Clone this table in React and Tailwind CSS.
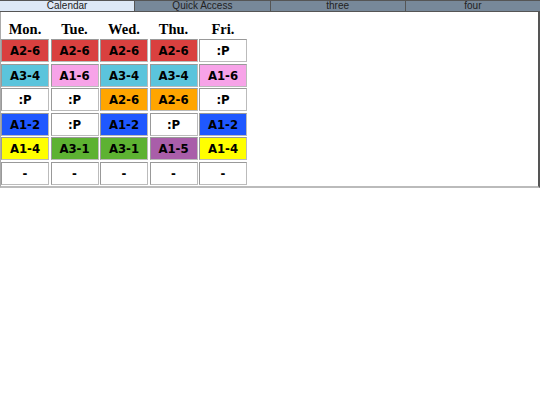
import React from "react";

const rows = [
  [["A2-6", "bg-[#d9403f]"], ["A2-6", "bg-[#d9403f]"], ["A2-6", "bg-[#d9403f]"], ["A2-6", "bg-[#d9403f]"], [":P", "bg-white"]],
  [["A3-4", "bg-[#5bc4dc]"], ["A1-6", "bg-[#f7a3e8]"], ["A3-4", "bg-[#5bc4dc]"], ["A3-4", "bg-[#5bc4dc]"], ["A1-6", "bg-[#f7a3e8]"]],
  [[":P", "bg-white"], [":P", "bg-white"], ["A2-6", "bg-[#ffa500]"], ["A2-6", "bg-[#ffa500]"], [":P", "bg-white"]],
  [["A1-2", "bg-[#1f58ff]"], [":P", "bg-white"], ["A1-2", "bg-[#1f58ff]"], [":P", "bg-white"], ["A1-2", "bg-[#1f58ff]"]],
  [["A1-4", "bg-[#ffff00]"], ["A3-1", "bg-[#5db232]"], ["A3-1", "bg-[#5db232]"], ["A1-5", "bg-[#a95ea9]"], ["A1-4", "bg-[#ffff00]"]],
  [["-", "bg-white"], ["-", "bg-white"], ["-", "bg-white"], ["-", "bg-white"], ["-", "bg-white"]],
];

const days = ["Mon.", "Tue.", "Wed.", "Thu.", "Fri."];
const tabs = ["Calendar", "Quick Access", "three", "four"];

export default function App() {
  return (
    <div className="w-[540px] h-[405px] bg-white overflow-hidden">
      <div className="flex h-[12px] border-t border-[#555]">
        {tabs.map((t, i) => (
          <div
            key={t}
            className={`flex-1 flex items-center justify-center text-[10px] leading-none text-[#222] border-b border-[#555] ${i > 0 ? "border-l" : ""} ${i === 0 ? "bg-[#dde8f6]" : "bg-[#778899]"}`}
            style={{ fontFamily: '"Liberation Sans", Arial, sans-serif' }}
          >
            {t}
          </div>
        ))}
      </div>
      <div className="h-[176px] border-l border-l-[#aaa] border-r-2 border-r-[#555] border-b-2 border-b-[#bbb] pt-[2px]">
        <div className="grid grid-cols-[48px_48px_48px_48px_48px] gap-x-[1.5px] gap-y-[1.6px] w-max">
          {days.map((d) => (
            <div
              key={d}
              className="h-[23.4px] flex items-end justify-center pb-[1px] text-[14.5px] font-bold text-black leading-none"
              style={{ fontFamily: '"Liberation Serif", "Times New Roman", serif' }}
            >
              {d}
            </div>
          ))}
          {rows.flat().map(([t, bg], i) => (
            <div
              key={i}
              className={`h-[23px] flex items-center justify-center border border-t-[#999] border-l-[#999] border-b-[#bbb] border-r-[#bbb] ${bg} text-[13px] font-bold text-black leading-none`}
              style={{ fontFamily: '"DejaVu Sans Condensed", "DejaVu Sans", Verdana, sans-serif', fontStretch: "condensed" }}
            >
              {t}
            </div>
          ))}
        </div>
      </div>
    </div>
  );
}
